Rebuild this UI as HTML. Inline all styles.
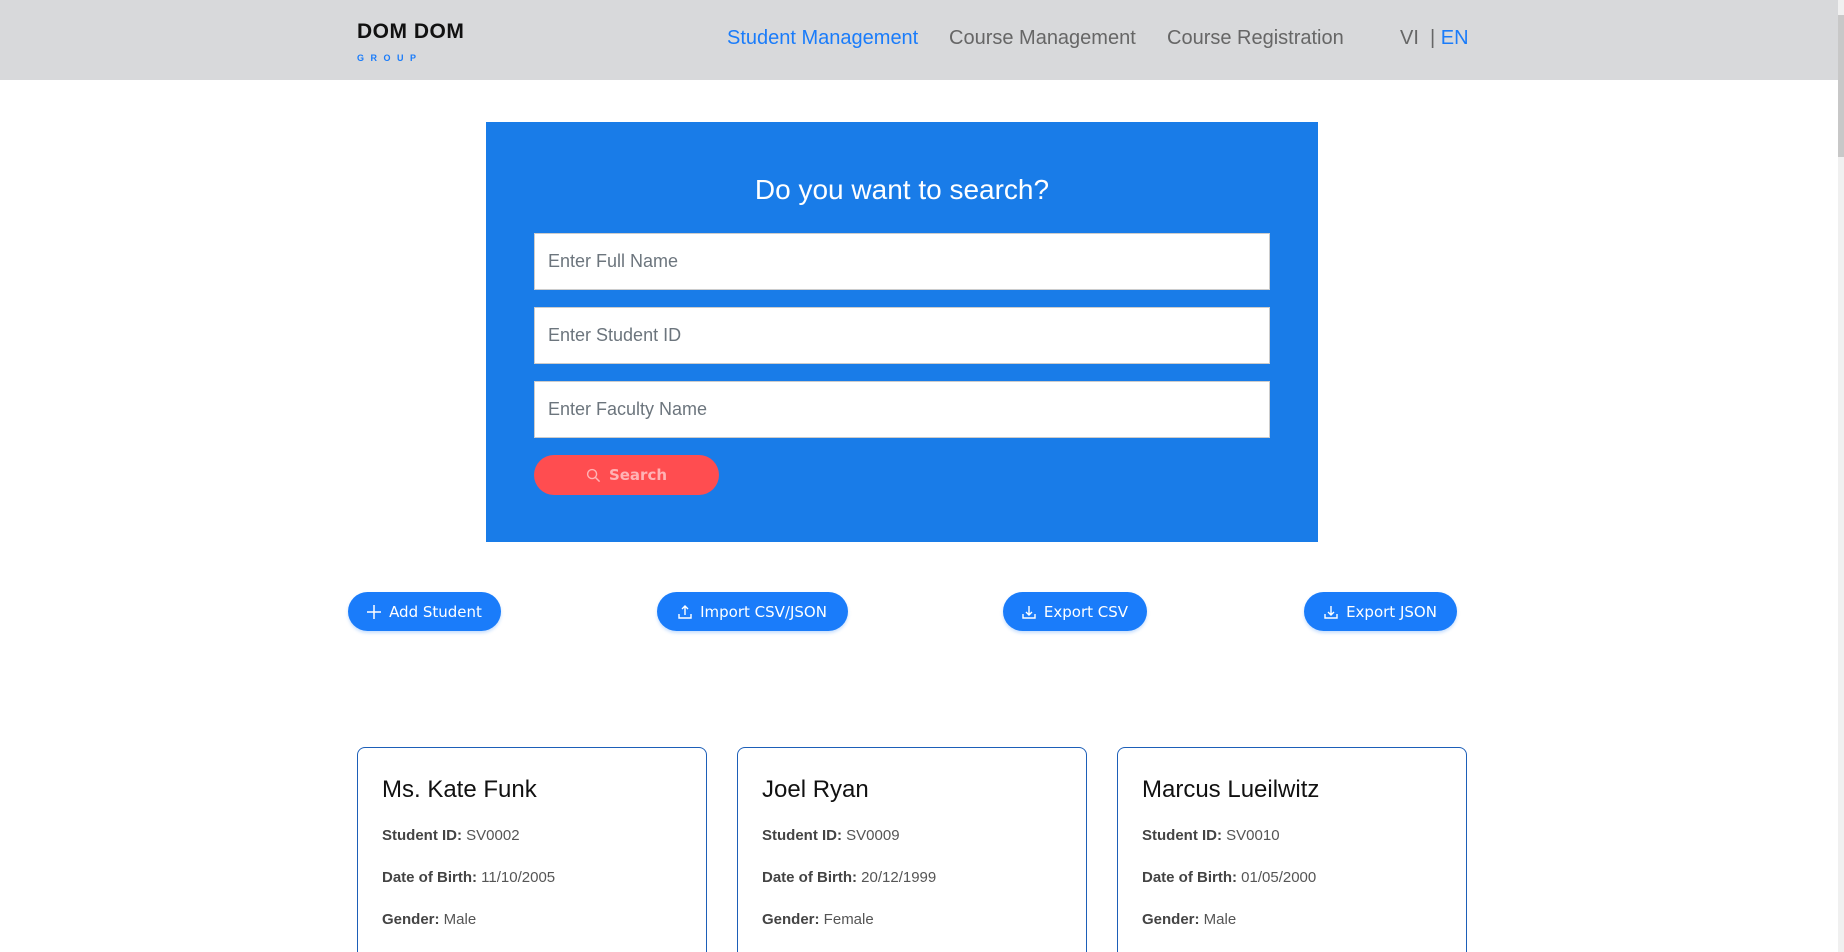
<!DOCTYPE html>
<html style="width:1844px;height:952px;overflow:hidden"><head><meta charset="utf-8"><style>
*{box-sizing:border-box;margin:0;padding:0}
body{width:1844px;height:952px;overflow:hidden;background:#fff;font-family:"Liberation Sans",Arial,sans-serif;position:relative}
.nav{position:absolute;left:0;top:0;width:1838px;height:80px;background:#d8d9db}
.abs{position:absolute;white-space:nowrap}
.sb{position:absolute;left:1838px;top:0;width:6px;height:952px;background:#f0f0f0}
.sb div{position:absolute;left:0;top:15px;width:6px;height:142px;background:#c8c8c8}
.box{position:absolute;left:486px;top:122px;width:832px;height:420px;background:#197ce8}
.inp{position:absolute;left:534px;width:736px;height:57px;background:#fff;border:1px solid #ccc;color:#6c757d;font-size:18px;padding-left:13px;line-height:55px}
.btn{position:absolute;top:592px;height:39px;background:#1a7cfa;border-radius:20px;color:#fff;font-family:"DejaVu Sans",sans-serif;font-size:15px;display:flex;align-items:center;justify-content:center;gap:8px;box-shadow:0 2px 3px rgba(26,124,250,.25)}
.card{position:absolute;top:747px;width:350px;height:215px;border:1.5px solid #1d5fb8;border-bottom:none;border-radius:8px 8px 0 0;padding:0 0 0 24px}
.card h3{font-weight:normal;font-size:24px;color:#111;margin-top:28px}
.card p{font-size:15px;color:#555;margin-top:22px;line-height:20px}
.card p b{color:#444}
</style></head><body>
<div class="nav">
<div class="abs" style="left:357px;top:20px;font-size:21px;font-weight:bold;color:#111;letter-spacing:.5px">DOM DOM</div>
<div class="abs" style="left:357px;top:53px;font-size:9px;font-weight:bold;color:#1a7cfa;letter-spacing:6.5px">GROUP</div>
<div class="abs" style="left:727px;top:27px;font-size:20px;color:#1a7cfa">Student Management</div>
<div class="abs" style="left:949px;top:27px;font-size:20px;color:#666">Course Management</div>
<div class="abs" style="left:1167px;top:27px;font-size:20px;color:#666">Course Registration</div>
<div class="abs" style="left:1400px;top:27px;font-size:20px;color:#666">VI&nbsp; |&nbsp;<span style="color:#1a7cfa">EN</span></div>
</div>
<div class="sb"><div></div></div>
<div class="box"></div>
<div class="abs" style="left:486px;width:832px;text-align:center;top:174px;font-size:28px;color:#fff">Do you want to search?</div>
<div class="inp" style="top:233px">Enter Full Name</div>
<div class="inp" style="top:307px">Enter Student ID</div>
<div class="inp" style="top:381px">Enter Faculty Name</div>
<div class="abs" style="left:534px;top:455px;width:185px;height:40px;border-radius:20px;background:#ff4d50;color:#ffb3b5;font-family:'DejaVu Sans',sans-serif;font-weight:bold;font-size:15px;display:flex;align-items:center;justify-content:center;gap:8px">
<svg width="15" height="15" viewBox="0 0 16 16"><circle cx="6.5" cy="6.5" r="4.8" fill="none" stroke="#ffb3b5" stroke-width="1.5"/><path d="M10 10l4.5 4.5" stroke="#ffb3b5" stroke-width="1.6"/></svg>Search</div>
<div class="btn" style="left:348px;width:153px"><svg width="14" height="14" viewBox="0 0 14 14"><path d="M7 0v14M0 7h14" stroke="#fff" stroke-width="1.5"/></svg>Add Student</div>
<div class="btn" style="left:657px;width:191px"><svg width="14" height="14" viewBox="0 0 14 14"><path d="M7 1v9M4 4l3-3 3 3M1 9v4h12V9" fill="none" stroke="#fff" stroke-width="1.4"/></svg>Import CSV/JSON</div>
<div class="btn" style="left:1003px;width:144px"><svg width="14" height="14" viewBox="0 0 14 14"><path d="M7 1v9M4 7l3 3 3-3M1 9v4h12V9" fill="none" stroke="#fff" stroke-width="1.4"/></svg>Export CSV</div>
<div class="btn" style="left:1304px;width:153px"><svg width="14" height="14" viewBox="0 0 14 14"><path d="M7 1v9M4 7l3 3 3-3M1 9v4h12V9" fill="none" stroke="#fff" stroke-width="1.4"/></svg>Export JSON</div>
<div class="card" style="left:357px"><h3>Ms. Kate Funk</h3><p><b>Student ID:</b> SV0002</p><p><b>Date of Birth:</b> 11/10/2005</p><p><b>Gender:</b> Male</p></div>
<div class="card" style="left:737px"><h3>Joel Ryan</h3><p><b>Student ID:</b> SV0009</p><p><b>Date of Birth:</b> 20/12/1999</p><p><b>Gender:</b> Female</p></div>
<div class="card" style="left:1117px"><h3>Marcus Lueilwitz</h3><p><b>Student ID:</b> SV0010</p><p><b>Date of Birth:</b> 01/05/2000</p><p><b>Gender:</b> Male</p></div>
</body></html>
